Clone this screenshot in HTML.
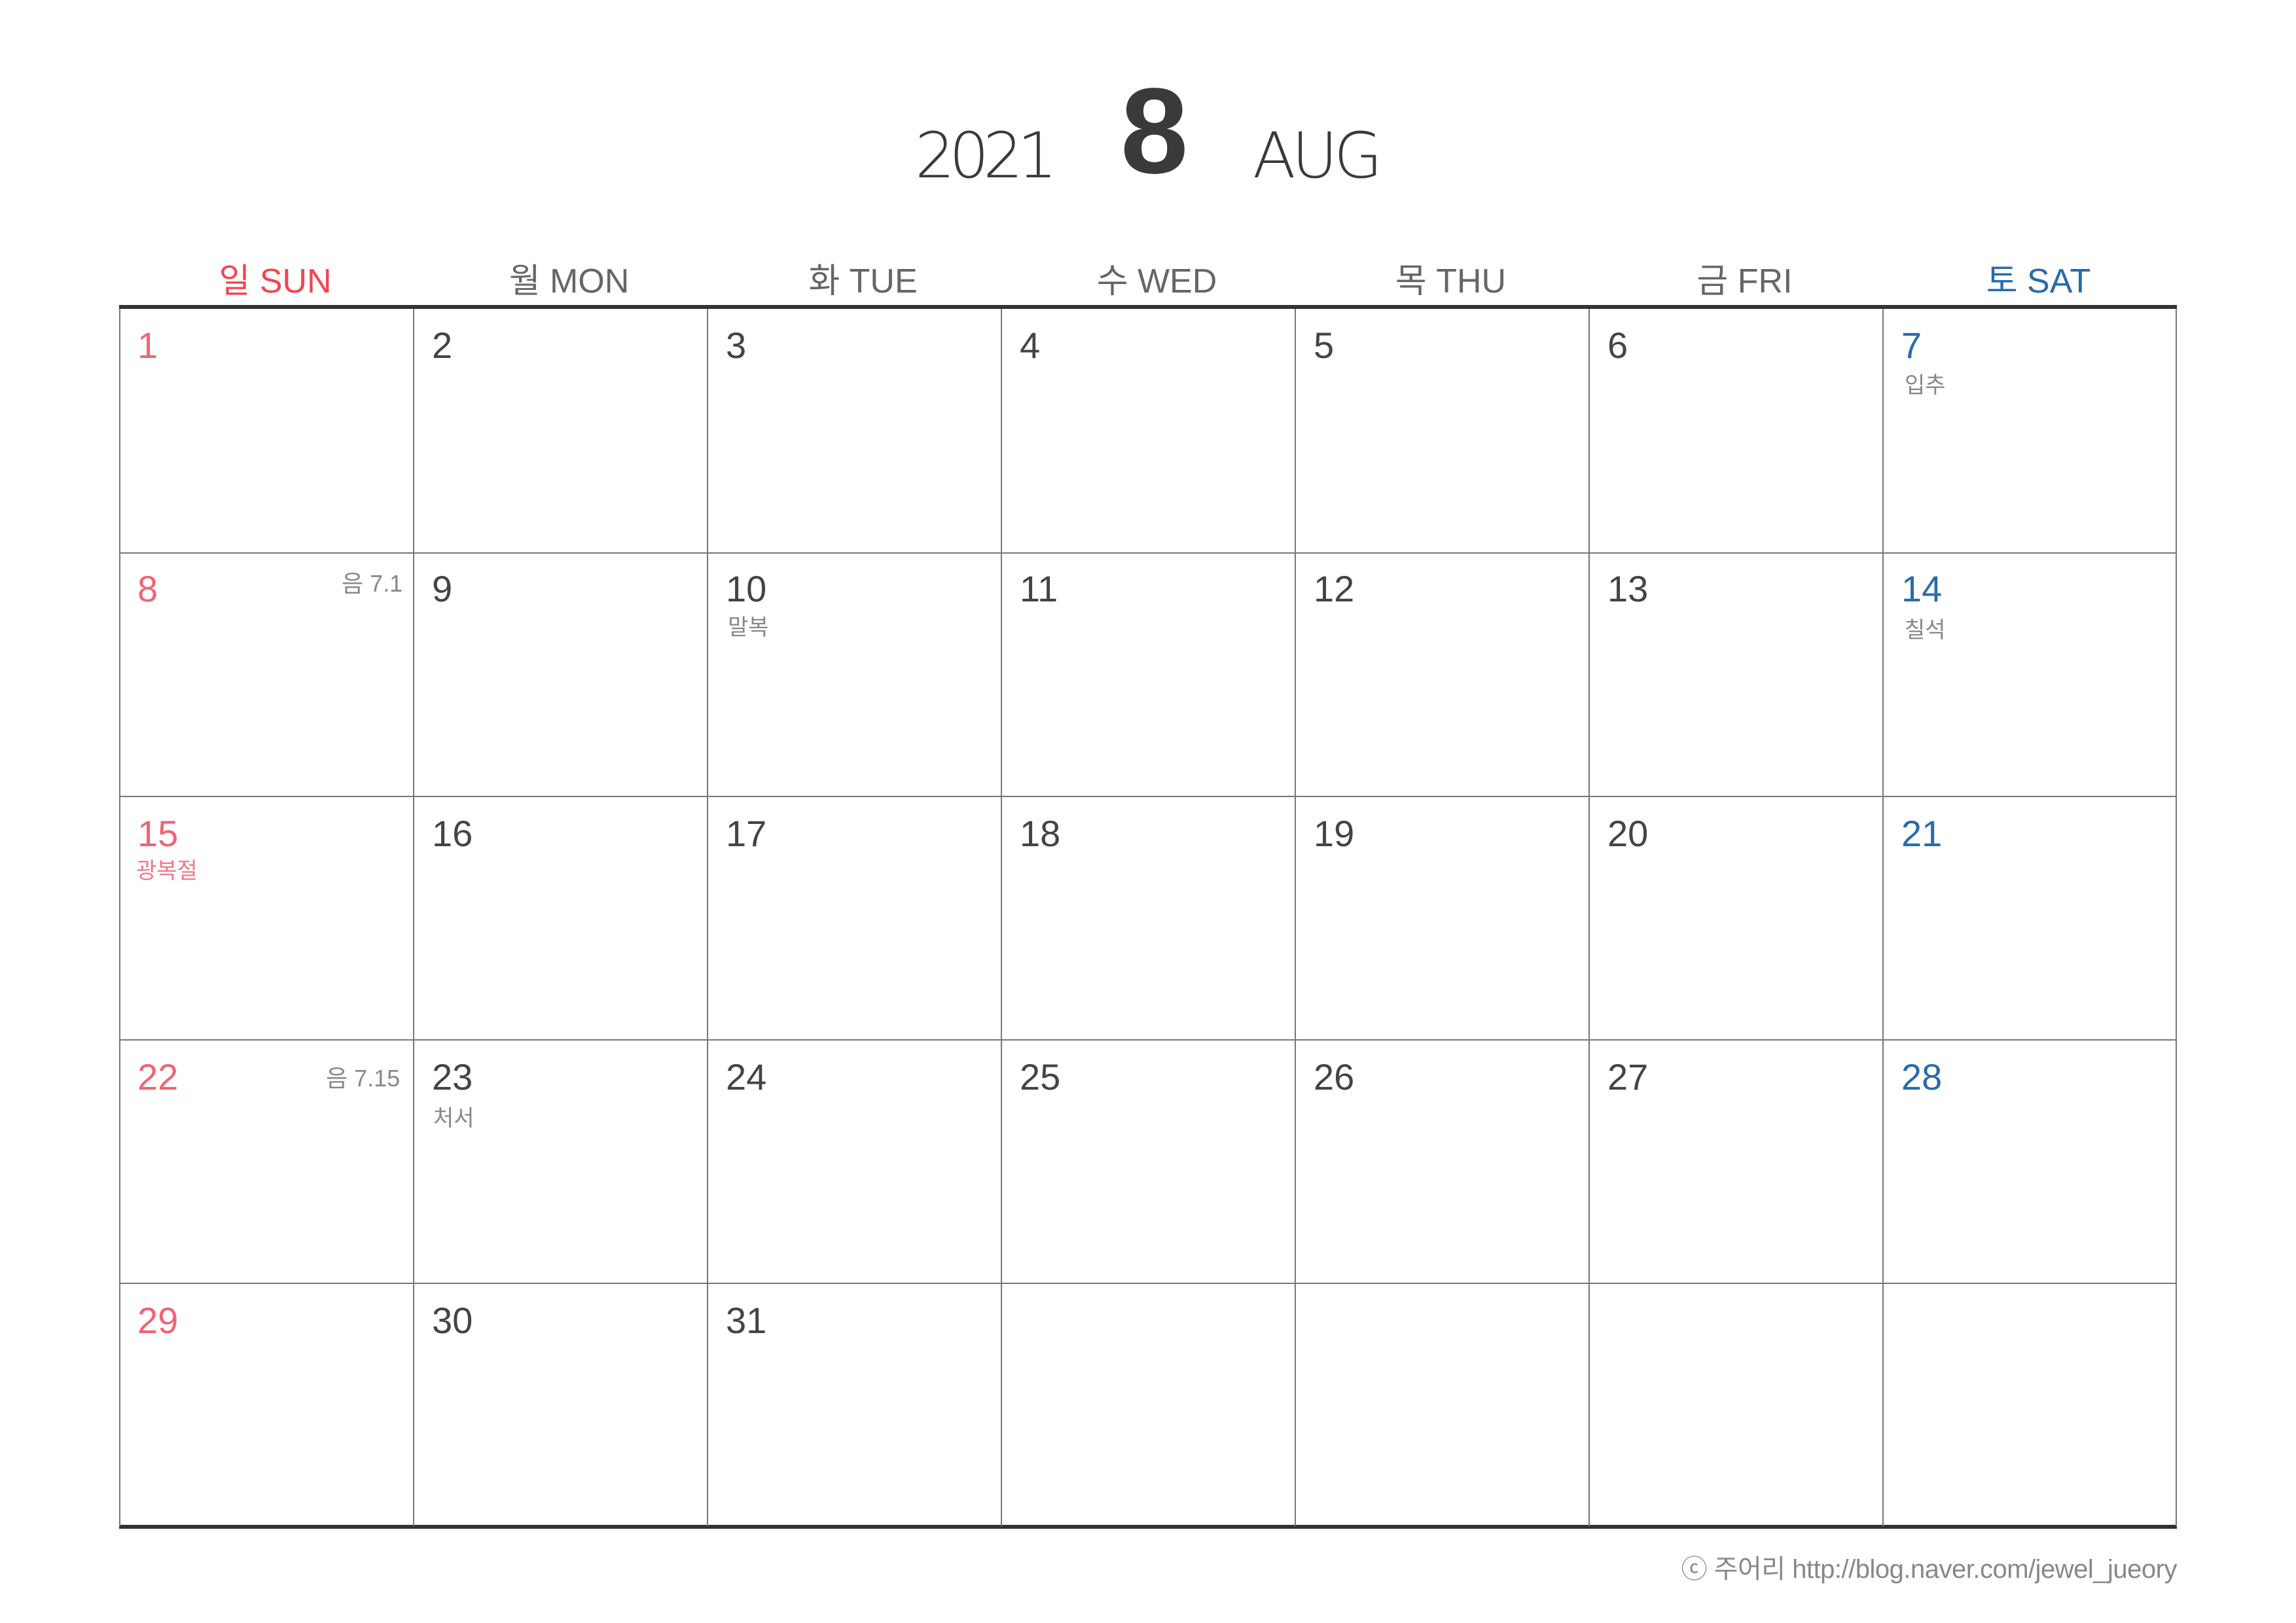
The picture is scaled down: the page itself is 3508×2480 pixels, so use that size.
<!DOCTYPE html>
<html><head><meta charset="utf-8"><style>
html,body{margin:0;padding:0;background:#fff;}
body{width:3508px;height:2480px;position:relative;overflow:hidden;font-family:"Liberation Sans","Noto Sans CJK KR",sans-serif;}
.a{position:absolute;line-height:1;white-space:nowrap;}
.vl{position:absolute;top:472px;height:1860px;width:2px;background:#777;}
.hl{position:absolute;left:182px;width:3144px;height:2px;background:#777;}
.n{font-size:56px;color:#444;}
.s{font-size:34px;color:#888;}
.sun{color:#f06474;}
.sat{color:#2a6aad;}
.h{font-size:52px;color:#666;text-align:center;width:449px;}
.h.sun{color:#f04650;}
.h.sat{color:#2a6aad;}
.t{font-family:'DejaVu Sans ExtraLight','DejaVu Sans Light','Liberation Sans',sans-serif;color:#3a3a3a;}
</style></head><body>
<div class="a t" style="left:1398px;top:190px;font-size:96px;letter-spacing:-9px;">2021</div>
<div class="a" style="left:1712px;top:108px;font-size:186px;font-weight:bold;color:#3a3a3a;">8</div>
<div class="a t" style="left:1914px;top:190px;font-size:96px;letter-spacing:-6px;">AUG</div>

<div class="a h sun" style="left:196px;top:404px;">일 SUN</div>
<div class="a h" style="left:645px;top:404px;">월 MON</div>
<div class="a h" style="left:1094px;top:404px;">화 TUE</div>
<div class="a h" style="left:1543px;top:404px;">수 WED</div>
<div class="a h" style="left:1992px;top:404px;">목 THU</div>
<div class="a h" style="left:2441px;top:404px;">금 FRI</div>
<div class="a h sat" style="left:2890px;top:404px;">토 SAT</div>

<div class="a" style="left:182px;top:466px;width:3144px;height:6px;background:#333;"></div>
<div class="a" style="left:182px;top:2330px;width:3144px;height:6px;background:#333;"></div>
<div class="vl" style="left:182px"></div>
<div class="vl" style="left:631px"></div>
<div class="vl" style="left:1080px"></div>
<div class="vl" style="left:1529px"></div>
<div class="vl" style="left:1978px"></div>
<div class="vl" style="left:2427px"></div>
<div class="vl" style="left:2876px"></div>
<div class="vl" style="left:3324px"></div>
<div class="hl" style="top:844px"></div>
<div class="hl" style="top:1216px"></div>
<div class="hl" style="top:1588px"></div>
<div class="hl" style="top:1960px"></div>

<div class="a n sun" style="left:210px;top:500px">1</div>
<div class="a n" style="left:660px;top:500px">2</div>
<div class="a n" style="left:1109px;top:500px">3</div>
<div class="a n" style="left:1558px;top:500px">4</div>
<div class="a n" style="left:2007px;top:500px">5</div>
<div class="a n" style="left:2456px;top:500px">6</div>
<div class="a n sat" style="left:2905px;top:500px">7</div>
<div class="a s" style="left:2910px;top:572px">입추</div>

<div class="a n sun" style="left:210px;top:872px">8</div>
<div class="a s" style="left:522px;top:874px;font-size:36px;">음 7.1</div>
<div class="a n" style="left:660px;top:872px">9</div>
<div class="a n" style="left:1109px;top:872px">10</div>
<div class="a s" style="left:1112px;top:942px">말복</div>
<div class="a n" style="left:1558px;top:872px">11</div>
<div class="a n" style="left:2007px;top:872px">12</div>
<div class="a n" style="left:2456px;top:872px">13</div>
<div class="a n sat" style="left:2905px;top:872px">14</div>
<div class="a s" style="left:2910px;top:946px">칠석</div>

<div class="a n sun" style="left:210px;top:1246px">15</div>
<div class="a s sun" style="left:208px;top:1314px;color:#f27888;">광복절</div>
<div class="a n" style="left:660px;top:1246px">16</div>
<div class="a n" style="left:1109px;top:1246px">17</div>
<div class="a n" style="left:1558px;top:1246px">18</div>
<div class="a n" style="left:2007px;top:1246px">19</div>
<div class="a n" style="left:2456px;top:1246px">20</div>
<div class="a n sat" style="left:2905px;top:1246px">21</div>

<div class="a n sun" style="left:210px;top:1618px">22</div>
<div class="a s" style="left:498px;top:1630px;font-size:36px;">음 7.15</div>
<div class="a n" style="left:660px;top:1618px">23</div>
<div class="a s" style="left:662px;top:1692px">처서</div>
<div class="a n" style="left:1109px;top:1618px">24</div>
<div class="a n" style="left:1558px;top:1618px">25</div>
<div class="a n" style="left:2007px;top:1618px">26</div>
<div class="a n" style="left:2456px;top:1618px">27</div>
<div class="a n sat" style="left:2905px;top:1618px">28</div>

<div class="a n sun" style="left:210px;top:1990px">29</div>
<div class="a n" style="left:660px;top:1990px">30</div>
<div class="a n" style="left:1109px;top:1990px">31</div>

<div class="a" style="right:182px;top:2378px;font-size:40px;color:#888;letter-spacing:-0.5px;">ⓒ 주어리 http://blog.naver.com/jewel_jueory</div>
</body></html>
